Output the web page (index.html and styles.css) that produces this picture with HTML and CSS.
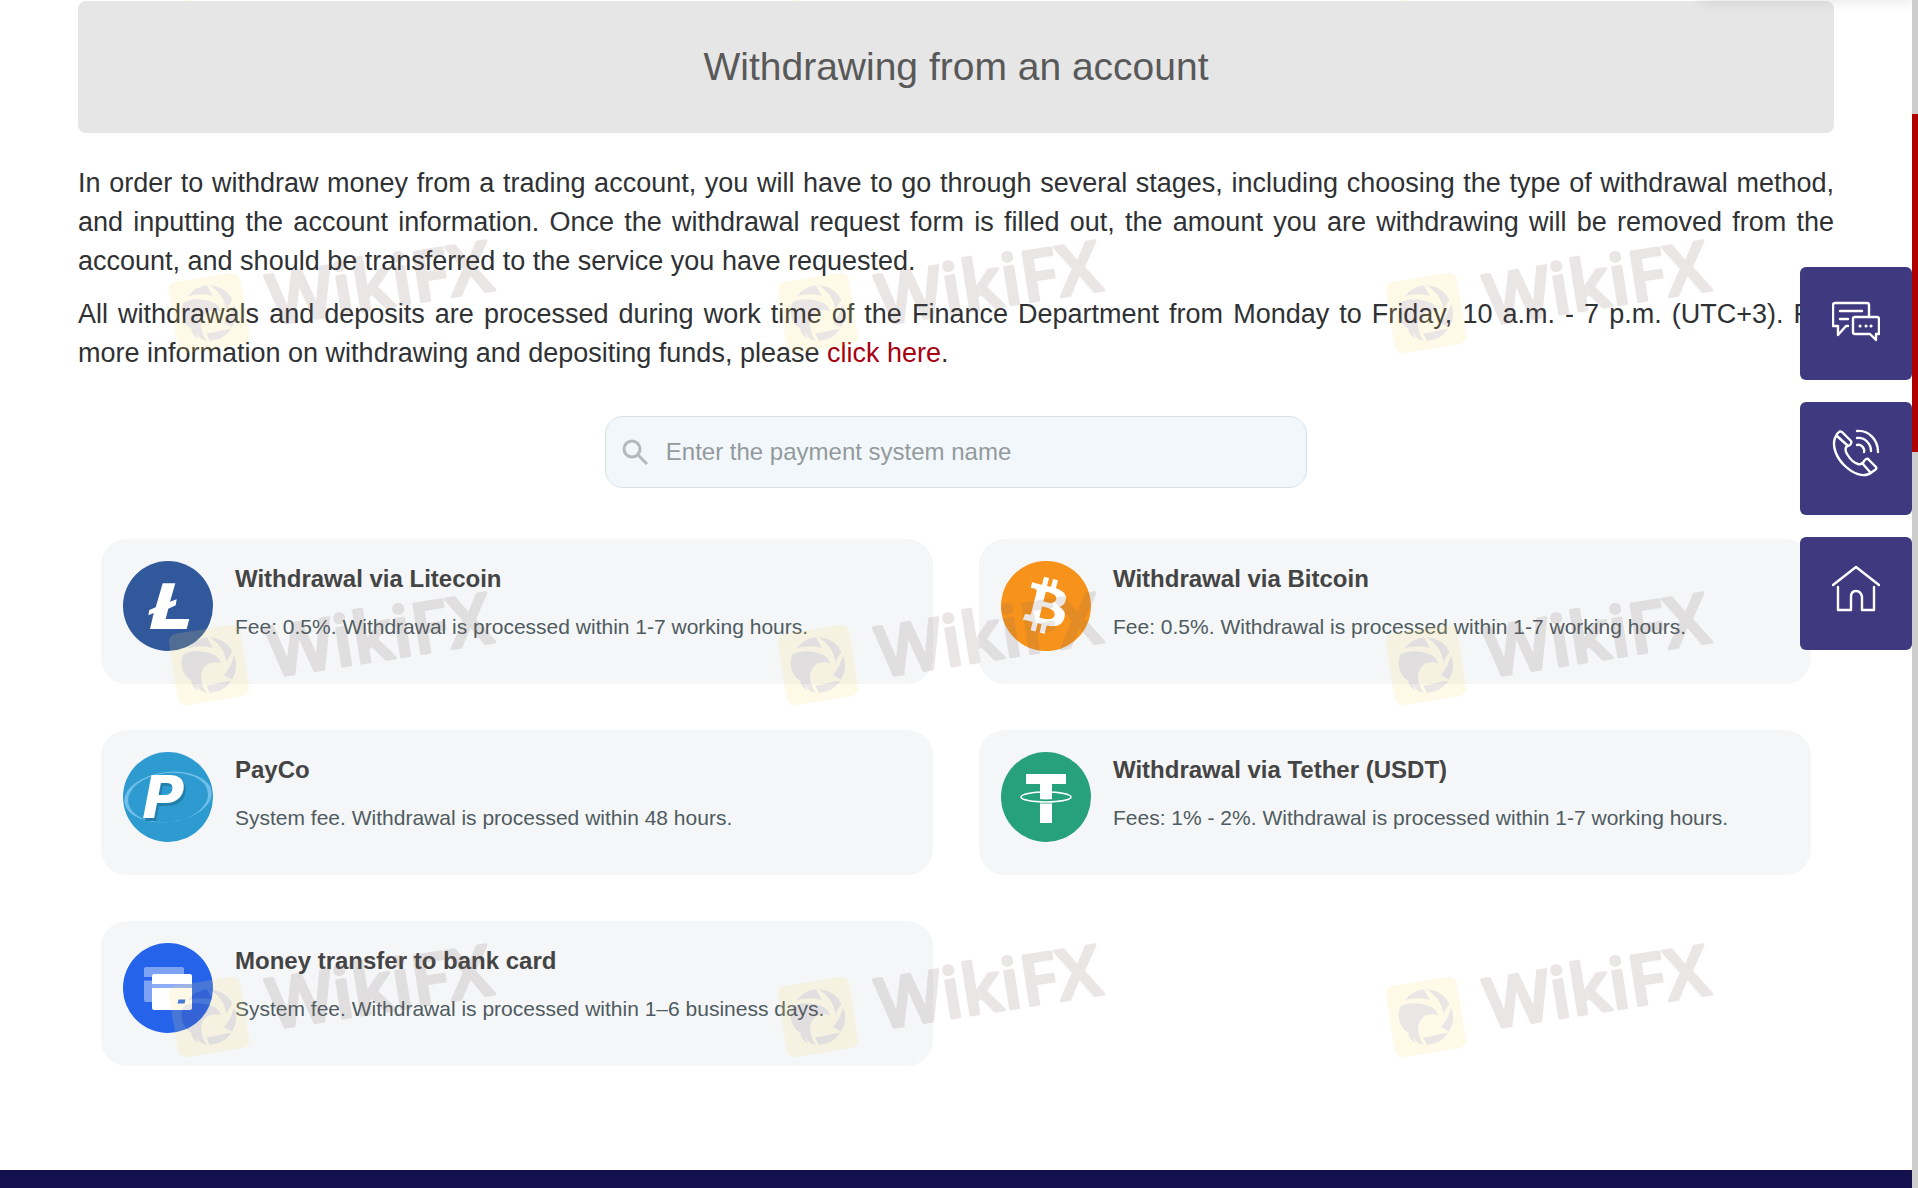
FILE: index.html
```
<!DOCTYPE html>
<html lang="en">
<head>
    <meta charset="utf-8">
    <title>Withdrawing from an account</title>
    <link rel="stylesheet" href="styles.css">
</head>
<body>
    <div class="page">
        <div class="header-shadow"></div>
        <main class="container">
            <h1 class="page-title">Withdrawing from an account</h1>

            <div class="intro">
                <p>In order to withdraw money from a trading account, you will have to go through several stages, including choosing the type of withdrawal method, and inputting the account information. Once the withdrawal request form is filled out, the amount you are withdrawing will be removed from the account, and should be transferred to the service you have requested.</p>
                <p>All withdrawals and deposits are processed during work time of the Finance Department from Monday to Friday, 10 a.m. - 7 p.m. (UTC+3). For more information on withdrawing and depositing funds, please <a href="#">click here</a>.</p>
            </div>

            <label class="search">
                <svg class="search-icon" viewBox="0 0 26 26" aria-hidden="true">
                    <circle cx="10" cy="10" r="8"/>
                    <path d="M16 16l9 9"/>
                </svg>
                <input type="text" placeholder="Enter the payment system name" aria-label="Enter the payment system name">
            </label>

            <div class="methods">
                <div class="card">
                    <svg class="card-icon" viewBox="0 0 90 90" aria-hidden="true">
                        <circle cx="45" cy="45" r="45" fill="#30589a"/>
                        <path fill="#fff" d="M39.7 22.3H52.3L47 40.7l6.7-2.4-1 6-7.4 3.4L42.7 58H66.300l-2.600 10H27l3.700-16-5.400 2.300 1-5.300 6.400-2.700z"/>
                    </svg>
                    <div class="card-text">
                        <h2>Withdrawal via Litecoin</h2>
                        <p>Fee: 0.5%. Withdrawal is processed within 1-7 working hours.</p>
                    </div>
                </div>
                <div class="card">
                    <svg class="card-icon" viewBox="0 0 24 24" aria-hidden="true">
                        <circle cx="12" cy="12" r="11" fill="#fff"/>
                        <path fill="#f7931a" d="M23.638 14.904c-1.602 6.43-8.113 10.34-14.542 8.736C2.67 22.05-1.244 15.525.362 9.105 1.962 2.67 8.475-1.243 14.9.358c6.43 1.605 10.342 8.115 8.738 14.548v-.002zm-6.35-4.613c.24-1.59-.974-2.45-2.64-3.03l.54-2.153-1.315-.33-.525 2.107c-.345-.087-.705-.167-1.064-.25l.526-2.127-1.32-.33-.54 2.165c-.285-.067-.565-.132-.84-.2l-1.815-.45-.35 1.407s.975.225.955.236c.535.136.63.486.615.766l-1.477 5.92c-.075.166-.24.406-.614.314.015.02-.96-.24-.96-.24l-.66 1.51 1.71.426.93.242-.54 2.19 1.32.327.54-2.17c.36.1.705.19 1.05.273l-.51 2.154 1.32.33.545-2.19c2.24.427 3.93.257 4.64-1.774.57-1.637-.03-2.58-1.217-3.196.854-.193 1.5-.76 1.68-1.93h.01zm-3.01 4.22c-.404 1.64-3.157.75-4.05.53l.72-2.9c.896.23 3.757.67 3.33 2.37zm.41-4.24c-.37 1.49-2.662.735-3.405.55l.654-2.64c.744.18 3.137.524 2.75 2.084v.006z"/>
                    </svg>
                    <div class="card-text">
                        <h2>Withdrawal via Bitcoin</h2>
                        <p>Fee: 0.5%. Withdrawal is processed within 1-7 working hours.</p>
                    </div>
                </div>
                <div class="card">
                    <svg class="card-icon" viewBox="0 0 90 90" aria-hidden="true">
                        <circle cx="45" cy="45" r="45" fill="#2d9bcf"/>
                        <path fill="#6fbfea" fill-rule="evenodd" transform="rotate(-7 45 45)" d="M1 45a44 25 0 0 1 88 0a44 25 0 0 1-88 0zM5 46a40 24 0 0 0 80 0a40 23.500 0 0 0-40-25a40 24 0 0 0-40 25z"/>
                        <text class="payco-letter" x="19" y="66">P</text>
                    </svg>
                    <div class="card-text">
                        <h2>PayCo</h2>
                        <p>System fee. Withdrawal is processed within 48 hours.</p>
                    </div>
                </div>
                <div class="card">
                    <svg class="card-icon" viewBox="0 0 90 90" aria-hidden="true">
                        <circle cx="45" cy="45" r="45" fill="#26a17b"/>
                        <path fill="#fff" d="M25 22h40v10H51v39H39V32H25z"/>
                        <path fill="none" stroke="#26a17b" stroke-width="4" d="M36 49q9 1 18 0"/>
                        <ellipse cx="45" cy="45" rx="25" ry="5" fill="none" stroke="#fff" stroke-width="1.600"/>
                    </svg>
                    <div class="card-text">
                        <h2>Withdrawal via Tether (USDT)</h2>
                        <p>Fees: 1% - 2%. Withdrawal is processed within 1-7 working hours.</p>
                    </div>
                </div>
                <div class="card">
                    <svg class="card-icon" viewBox="0 0 90 90" aria-hidden="true">
                        <circle cx="45" cy="45" r="45" fill="#2563eb"/>
                        <path fill="#7ea2f4" d="M23 24h36q2 0 2 2v8H21v-8q0-2 2-2zM21 37.500h12V59H23q-2 0-2-2z"/>
                        <path fill="#fff" d="M31 31h36q2 0 2 2v8H29v-8q0-2 2-2zM29 45h40v20q0 2-2 2H31q-2 0-2-2z"/>
                        <path fill="#8fadf6" d="M29 41h40v4H29z"/>
                        <path fill="#2563eb" d="M55.500 56.500h7l-1 4h-7z"/>
                    </svg>
                    <div class="card-text">
                        <h2>Money transfer to bank card</h2>
                        <p>System fee. Withdrawal is processed within 1–6 business days.</p>
                    </div>
                </div>
            </div>
        </main>
        <footer class="footer"></footer>
    </div>

    <nav class="side-buttons">
        <button type="button" aria-label="Chat">
            <svg viewBox="0 0 48 48">
                <path d="M37 22V11q0-2-2-2H3Q1 9 1 11v21h5v9l8-9h2M8 17h22M8 25h8"/>
                <path d="M23 23h22q2 0 2 2v15h-3v6l-6-6H23q-2 0-2-2V25q0-2 2-2z"/>
                <path class="dots" d="M28 32h.1M34 32h.1M39 32h.1"/>
            </svg>
        </button>
        <button type="button" aria-label="Call">
            <svg viewBox="0 0 48 48">
                <path d="M7 3q1-1 3 0l9 9q1 2-1 4l-2 1c-3 0-3 5-1 8 3 5 7 9 11 10q5 1 6-3l2-2q2-1 3 1l7 7q1 2-1 3l-3 2c-8 7-20 1-28-7S0 17 3 9l2-4zM5 7l10 9M30 34l8 9"/>
                <path d="M25 16c4-1 8 3 7 7M25 9c8-1 14 6 14 13M25 2c12-1 21 9 21 21"/>
            </svg>
        </button>
        <button type="button" aria-label="Home">
            <svg viewBox="0 0 48 48">
                <path d="M1 21L24 3l23 18M6 23v23h13V33q0-6 5-6t6 6v13h12V23"/>
            </svg>
        </button>
    </nav>

    <!-- slanted logo repeated over the page -->
    <svg class="watermark" aria-hidden="true">
        <defs>
            <g id="mark">
                <g transform="rotate(-9)">
                    <rect x="-36" y="-36" width="72" height="72" rx="8" fill="#ffe070"/>
                    <text x="60" y="22">WikiFX</text>
                </g>
                <g class="eagle" transform="scale(.3333) translate(-138 -262)">
                    <path d="M75 212A83 83 0 0 1 132 179L149 211C125 203 98 205 75 212z"/>
                    <path d="M140 179A83 83 0 0 1 208 222L190 252C185 217 165 195 140 179z"/>
                    <path d="M213 232A83 83 0 0 1 207 306L183 292C198 275 208 255 213 232z"/>
                    <path d="M205 310A83 83 0 0 1 140 345L130 322C160 322 185 308 205 310z"/>
                    <path d="M62 230C80 219 110 218 135 225C158 230 172 242 173 258C160 250 150 255 140 256C118 268 112 285 115 305C118 325 125 335 131 345C112 342 106 333 102 322C100 330 106 338 110 341C92 334 84 318 85 308C72 304 58 284 56 262C55 248 57 240 62 230z"/>
                </g>
            </g>
            <g id="mark-row">
                <use href="#mark" x="209"/>
                <use href="#mark" x="818"/>
                <use href="#mark" x="1426"/>
            </g>
        </defs>
        <use href="#mark-row" y="-39"/>
        <use href="#mark-row" y="313"/>
        <use href="#mark-row" y="665"/>
        <use href="#mark-row" y="1017"/>
    </svg>

    <div class="scroll-track"><div class="scroll-thumb"></div></div>
</body>
</html>
```
FILE: styles.css
```
* {
    box-sizing: border-box;
}

body {
    margin: 0;
    padding-right: 6px;
    font-family: "Liberation Sans", Arial, sans-serif;
    background-color: #fff;
    color: #2f3133;
}

.page {
    display: flex;
    flex-direction: column;
    min-height: 100vh;
}

.header-shadow {
    position: absolute;
    top: -8px;
    right: 6px;
    width: 212px;
    height: 8px;
    box-shadow: 0 0 14px rgba(0, 0, 0, 0.15);
}

.container {
    flex: 1;
    padding: 1px 78px 60px;
}

.page-title {
    margin: 0;
    padding: 42px 20px;
    border-radius: 8px;
    background-color: #e6e6e6;
    color: #595959;
    font-size: 39px;
    line-height: 48px;
    font-weight: normal;
    text-align: center;
}

.intro {
    margin-top: 31px;
    font-size: 27px;
    line-height: 39px;
    text-align: justify;
}

.intro p {
    margin: 0 0 14px;
}

.intro a {
    color: #a80010;
    text-decoration: none;
}

.search {
    display: flex;
    align-items: center;
    gap: 16px;
    width: 40%;
    height: 72px;
    margin: 43px auto 0;
    padding: 0 16px;
    border: 1px solid #d9e2e5;
    border-radius: 18px;
    background-color: #f1f7fa;
}

.search-icon {
    flex: none;
    width: 26px;
    height: 26px;
    fill: none;
    stroke: #b3babb;
    stroke-width: 3;
}

.search input {
    flex: 1;
    border: none;
    outline: none;
    background: none;
    font-family: inherit;
    font-size: 24px;
    color: #333;
}

.search input::placeholder {
    color: #949a9c;
}

.methods {
    display: grid;
    grid-template-columns: 1fr 1fr;
    gap: 46px;
    margin-top: 51px;
    padding: 0 23px;
}

.card {
    display: flex;
    gap: 22px;
    min-height: 145px;
    padding: 22px;
    border-radius: 26px;
    background-color: #f4f6f7;
}

.card-icon {
    flex: none;
    width: 90px;
    height: 90px;
}

.card-text h2 {
    margin: 0;
    font-size: 24px;
    line-height: 36px;
    color: #444;
}

.card-text p {
    margin: 14px 0 0;
    font-size: 21px;
    line-height: 32px;
    color: #4f5b60;
}

.payco-letter {
    font: italic bold 58px "DejaVu Sans", sans-serif;
    fill: #fff;
    filter: drop-shadow(2px 3px 0 #2380ae);
}

.footer {
    height: 18px;
    background-color: #140f4e;
}

.side-buttons {
    position: fixed;
    top: 267px;
    right: 6px;
    display: flex;
    flex-direction: column;
    gap: 22px;
}

.side-buttons button {
    display: flex;
    align-items: center;
    justify-content: center;
    width: 112px;
    height: 113px;
    padding: 0 0 12px;
    border: none;
    border-radius: 6px;
    background-color: #3f3a80;
    cursor: pointer;
}

.side-buttons svg {
    width: 48px;
    height: 48px;
    fill: none;
    stroke: #fff;
    stroke-width: 2.4;
    stroke-linecap: round;
    stroke-linejoin: round;
}

.side-buttons .dots {
    stroke-width: 3;
}

.watermark {
    position: absolute;
    top: 0;
    left: 0;
    width: 100%;
    height: 100%;
    opacity: 0.16;
    pointer-events: none;
}

.watermark text {
    font: 600 70px "Open Sans", sans-serif;
    fill: #7a6464;
    stroke: #7a6464;
    stroke-width: 3;
    stroke-linejoin: round;
}

.eagle {
    fill: #7a6464;
}

.scroll-track {
    position: fixed;
    top: 0;
    right: 0;
    width: 6px;
    height: 100%;
    padding-top: 114px;
    background-color: #ccc;
}

.scroll-thumb {
    height: 338px;
    background-color: #b00000;
}
```
